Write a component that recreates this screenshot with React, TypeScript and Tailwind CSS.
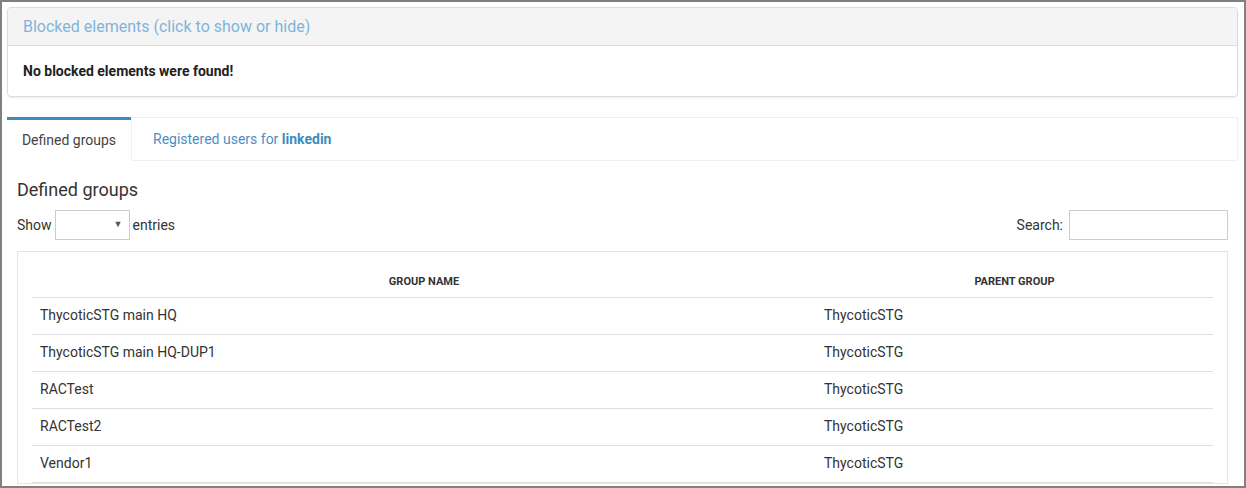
import React from 'react';

const rows = [
  { name: 'ThycoticSTG main HQ', parent: 'ThycoticSTG' },
  { name: 'ThycoticSTG main HQ-DUP1', parent: 'ThycoticSTG' },
  { name: 'RACTest', parent: 'ThycoticSTG' },
  { name: 'RACTest2', parent: 'ThycoticSTG' },
  { name: 'Vendor1', parent: 'ThycoticSTG' },
];

export default function App() {
  return (
    <div
      className="w-[1246px] h-[488px] overflow-hidden border-2 border-[#808080] bg-white text-[#333]"
      style={{ fontFamily: 'Roboto, "Liberation Sans", sans-serif' }}
    >
      <div className="pt-[5px] pl-[5px] pr-[6px]">
        {/* blocked elements panel */}
        <div className="rounded-[4px] border border-[#dcdcdc] shadow-[0_1px_2px_rgba(0,0,0,0.08)]">
          <div className="h-[38px] flex items-center px-[15px] bg-[#f4f4f4] border-b border-[#dcdcdc] rounded-t-[4px]">
            <span className="text-[16px] text-[#7fb4da]">Blocked elements (click to show or hide)</span>
          </div>
          <div className="h-[50px] flex items-center px-[15px]">
            <span className="text-[14px] font-bold text-[#222]">No blocked elements were found!</span>
          </div>
        </div>

        {/* tabs */}
        <div className="mt-[20px]">
          <div className="flex h-[44px]">
            <div className="w-[124px] border-t-[3px] border-[#3c8dbc] flex items-center justify-center">
              <span className="text-[14px] text-[#444]">Defined groups</span>
            </div>
            <div className="flex-1 flex items-center pl-[21px] border border-[#f0f0f0]">
              <span className="text-[14px] text-[#4b8fc4]">
                Registered users for <span className="font-bold text-[#3c8dbc]">linkedin</span>
              </span>
            </div>
          </div>

          <div className="pl-[10px] pr-[10px]">
            <h3 className="mt-[19px] text-[18px] leading-[20px] text-[#333]">Defined groups</h3>
            <div className="mt-[10px] flex items-center justify-between">
              <div className="flex items-center gap-[3px] text-[14px]">
                <span>Show</span>
                <div className="w-[75px] h-[30px] border border-[#ccc] flex items-center justify-end pr-[6px]">
                  <span className="text-[9px] text-[#555]">▼</span>
                </div>
                <span>entries</span>
              </div>
              <div className="flex items-center gap-[6px] text-[14px]">
                <span>Search:</span>
                <div className="w-[159px] h-[30px] border border-[#ccc]" />
              </div>
            </div>

            <div className="mt-[11px] border border-[#e5e5e5] px-[14px] pt-[15px]">
              <table className="w-full border-collapse text-[14px]">
                <thead>
                  <tr className="border-b border-[#dedede]">
                    <th className="w-[784px] h-[30px] text-[11px] font-bold text-[#333] text-center align-middle uppercase">
                      Group Name
                    </th>
                    <th className="h-[30px] text-[11px] font-bold text-[#333] text-center align-middle uppercase">
                      Parent Group
                    </th>
                  </tr>
                </thead>
                <tbody>
                  {rows.map((r) => (
                    <tr key={r.name} className="border-b border-[#dedede]">
                      <td className="h-[37px] px-[8px] font-normal text-[#333]">{r.name}</td>
                      <td className="h-[37px] px-[8px] text-[#333]">{r.parent}</td>
                    </tr>
                  ))}
                </tbody>
              </table>
            </div>
          </div>
        </div>
      </div>
    </div>
  );
}
